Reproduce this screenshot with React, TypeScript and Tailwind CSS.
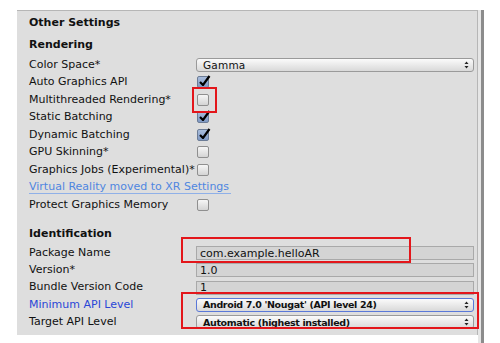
import React from 'react';

type Row =
  | { kind: 'dropdown'; label: string; value: string; star?: boolean; focus?: boolean; labelClass?: string }
  | { kind: 'check'; label: string; checked: boolean }
  | { kind: 'field'; label: string; value: string }
  | { kind: 'link'; label: string };

const rendering: Row[] = [
  { kind: 'dropdown', label: 'Color Space*', value: 'Gamma' },
  { kind: 'check', label: 'Auto Graphics API', checked: true },
  { kind: 'check', label: 'Multithreaded Rendering*', checked: false },
  { kind: 'check', label: 'Static Batching', checked: true },
  { kind: 'check', label: 'Dynamic Batching', checked: true },
  { kind: 'check', label: 'GPU Skinning*', checked: false },
  { kind: 'check', label: 'Graphics Jobs (Experimental)*', checked: false },
  { kind: 'link', label: 'Virtual Reality moved to XR Settings' },
  { kind: 'check', label: 'Protect Graphics Memory', checked: false },
];

const identification: Row[] = [
  { kind: 'field', label: 'Package Name', value: 'com.example.helloAR' },
  { kind: 'field', label: 'Version*', value: '1.0' },
  { kind: 'field', label: 'Bundle Version Code', value: '1' },
  { kind: 'dropdown', label: 'Minimum API Level', value: "Android 7.0 'Nougat' (API level 24)", focus: true, labelClass: 'text-[#2a46d6]' },
  { kind: 'dropdown', label: 'Target API Level', value: 'Automatic (highest installed)' },
];

function Arrows() {
  return (
    <svg width="5" height="8" viewBox="0 0 5 8" className="shrink-0">
      <path d="M2.5 0.5 L4.5 3 L0.5 3 Z" fill="#222" />
      <path d="M2.5 7.5 L4.5 5 L0.5 5 Z" fill="#222" />
    </svg>
  );
}

function Checkbox({ checked }: { checked: boolean }) {
  return (
    <div
      className={`relative w-[12px] h-[12px] rounded-[2px] border ${
        checked
          ? 'bg-gradient-to-b from-[#a9bddc] to-[#7f99c4] border-[#6c7c96]'
          : 'bg-gradient-to-b from-[#f6f6f6] to-[#d4d4d4] border-[#8f8f8f]'
      }`}
    >
      {checked && (
        <svg width="13" height="12" viewBox="0 0 13 12" className="absolute left-[0px] top-[-3px]">
          <path d="M2 8 L5 11 L11.5 2" stroke="#000" strokeWidth="2.2" fill="none" />
        </svg>
      )}
    </div>
  );
}

function Field({ row }: { row: Row }) {
  if (row.kind === 'dropdown') {
    return (
      <div
        className={`flex-1 h-[14px] flex items-center justify-between pl-[6px] pr-[4px] rounded-[3px] border bg-gradient-to-b from-[#fbfbfb] to-[#d9d9d9] ${
          row.focus ? 'border-[#5a78d8]' : 'border-[#9a9a9a]'
        }`}
      >
        <span className={`text-[#111] leading-none ${row.value === 'Gamma' ? 'text-[10.5px] tracking-[0.2px]' : 'text-[9.5px] font-bold tracking-[-0.35px]'}`}>
          {row.value}
        </span>
        <Arrows />
      </div>
    );
  }
  if (row.kind === 'check') {
    return (
      <div className="flex-1 flex items-center pl-[1px]">
        <Checkbox checked={row.checked} />
      </div>
    );
  }
  if (row.kind === 'field') {
    return (
      <div className="flex-1 h-[14px] flex items-center pl-[3px] bg-[#d4d4d4] border border-[#a9a9a9] text-[11px] text-[#111] leading-none">
        {row.value}
      </div>
    );
  }
  return null;
}

function SettingRow({ row, h }: { row: Row; h: string }) {
  if (row.kind === 'link') {
    return (
      <div className={`${h} flex items-center`}>
        <span className="text-[11px] text-[#4f86e0] border-b border-[#8fb0e8] leading-[13px] pr-[2px]">{row.label}</span>
      </div>
    );
  }
  return (
    <div className={`${h} flex items-center`}>
      <div className={`w-[167px] shrink-0 text-[11px] whitespace-nowrap ${row.kind === 'dropdown' && row.labelClass ? row.labelClass : 'text-[#111]'}`}>
        {row.label}
      </div>
      <Field row={row} />
    </div>
  );
}

export default function App() {
  return (
    <div className="relative w-[500px] h-[343px] bg-white overflow-hidden font-['DejaVu_Sans',sans-serif]">
      <div className="flex pt-[10px] pl-[17px] h-full">
        {/* Inspector panel */}
        <div className="w-[461px] h-[325px] bg-[#dedede] border-t border-r border-[#b6b6b6] pl-[12px] pr-[3px]">
          <div className="h-[20px] mt-[2px] flex items-center text-[11px] font-bold text-[#111]">Other Settings</div>
          <div className="h-[18px] mt-[3px] flex items-center text-[11px] font-bold text-[#111]">Rendering</div>
          <div className="mt-[2px]">
            {rendering.map((r) => (
              <SettingRow key={r.label} row={r} h="h-[17.5px]" />
            ))}
          </div>
          <div className="h-[18px] mt-[12px] flex items-center text-[11px] font-bold text-[#111]">Identification</div>
          <div className="mt-[1px]">
            {identification.map((r) => (
              <SettingRow key={r.label} row={r} h="h-[17.3px]" />
            ))}
          </div>
        </div>
        {/* Scrollbar edge */}
        <div className="w-[3px] bg-[#e6e6e6]" />
        <div className="w-[3px] bg-[#8c8c8c]" />
      </div>

      {/* Highlight boxes */}
      <div className="absolute left-[192px] top-[87px] w-[25px] h-[26px] border-2 border-[#e3161b]" />
      <div className="absolute left-[181px] top-[237px] w-[230px] h-[26px] border-2 border-[#e3161b]" />
      <div className="absolute left-[181px] top-[292px] w-[298px] h-[37px] border-2 border-[#e3161b]" />
    </div>
  );
}
